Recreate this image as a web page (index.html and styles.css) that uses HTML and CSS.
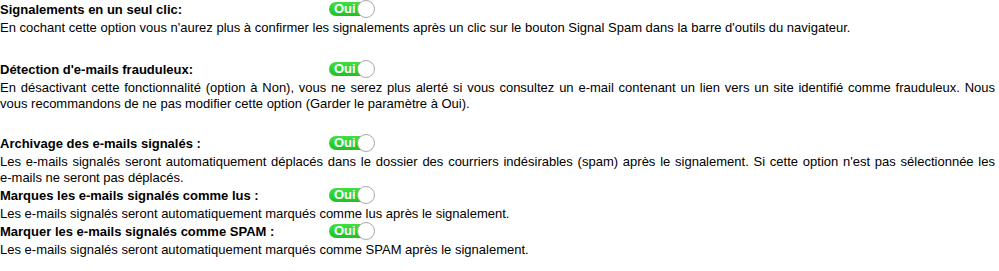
FILE: index.html
```html
<!DOCTYPE html>
<html lang="fr">
<head>
<meta charset="utf-8">
<link rel="stylesheet" href="styles.css">
</head>
<body>
<div class="options">
  <div class="item item-first">
    <div class="head"><span class="label">Signalements en un seul clic:</span><span class="toggle"><span class="track">Oui</span><span class="knob"></span></span></div>
    <p class="desc">En cochant cette option vous n'aurez plus à confirmer les signalements après un clic sur le bouton Signal Spam dans la barre d'outils du navigateur.</p>
  </div>
  <div class="item item-second">
    <div class="head"><span class="label">Détection d'e-mails frauduleux:</span><span class="toggle"><span class="track">Oui</span><span class="knob"></span></span></div>
    <p class="desc">En désactivant cette fonctionnalité (option à Non), vous ne serez plus alerté si vous consultez un e-mail contenant un lien vers un site identifié comme frauduleux. Nous vous recommandons de ne pas modifier cette option (Garder le paramètre à Oui).</p>
  </div>
  <div class="item">
    <div class="head"><span class="label">Archivage des e-mails signalés :</span><span class="toggle"><span class="track">Oui</span><span class="knob"></span></span></div>
    <p class="desc">Les e-mails signalés seront automatiquement déplacés dans le dossier des courriers indésirables (spam) après le signalement. Si cette option n'est pas sélectionnée les <span class="nowrap">e-mails</span> ne seront pas déplacés.</p>
  </div>
  <div class="item">
    <div class="head"><span class="label">Marques les e-mails signalés comme lus :</span><span class="toggle"><span class="track">Oui</span><span class="knob"></span></span></div>
    <p class="desc">Les e-mails signalés seront automatiquement marqués comme lus après le signalement.</p>
  </div>
  <div class="item">
    <div class="head"><span class="label">Marquer les e-mails signalés comme SPAM :</span><span class="toggle"><span class="track">Oui</span><span class="knob"></span></span></div>
    <p class="desc">Les e-mails signalés seront automatiquement marqués comme SPAM après le signalement.</p>
  </div>
</div>
</body>
</html>
```
FILE: styles.css
```css
html, body {
  margin: 0;
  padding: 0;
  background: #fff;
}
body {
  font-family: "Liberation Sans", Arial, sans-serif;
  font-size: 13px;
  color: #000;
}
.options {
  width: 995px;
  display: flex;
  flex-direction: column;
}
.item {
  margin-bottom: 0;
}
.item-first {
  margin-bottom: 24px;
}
.item-second {
  margin-bottom: 22px;
}
.head {
  display: flex;
  align-items: center;
  height: 18px;
}
.label {
  width: 329px;
  font-weight: bold;
  font-size: 13px;
}
.toggle {
  display: flex;
  align-items: center;
  position: relative;
  width: 47px;
  height: 18px;
}
.track {
  display: block;
  width: 32px;
  height: 14px;
  line-height: 14px;
  border-radius: 7px 0 0 7px;
  background: linear-gradient(#3ee03e, #22c022);
  color: #fff;
  font-weight: bold;
  font-size: 13px;
  padding-left: 5px;
  box-sizing: border-box;
}
.knob {
  position: absolute;
  left: 28px;
  top: 0;
  width: 18px;
  height: 18px;
  box-sizing: border-box;
  border-radius: 50%;
  background: #fff;
  border: 1px solid #a8a8a8;
}
.desc {
  margin: 0;
  padding-top: 2px;
  line-height: 16px;
  text-align: justify;
}
.nowrap {
  white-space: nowrap;
}
```
